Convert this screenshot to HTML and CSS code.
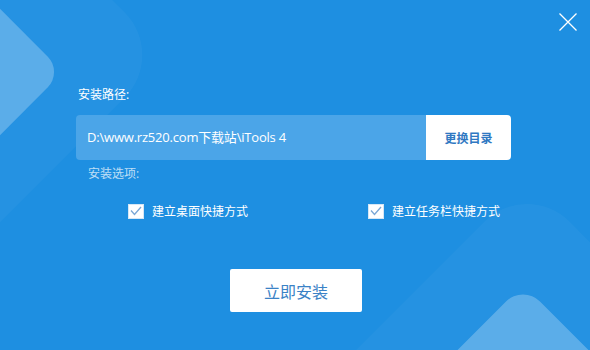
FILE: index.html
```html
<!DOCTYPE html>
<html lang="zh-CN">
<head>
<meta charset="utf-8">
<title>iTools 安装</title>
<link rel="stylesheet" href="styles.css">
</head>
<body>
<div class="window">
  <div class="deco deco-tl-soft"></div>
  <div class="deco deco-tl"></div>
  <div class="deco deco-br-soft"></div>
  <div class="deco deco-br"></div>

  <div class="titlebar">
    <button class="close" aria-label="关闭">
      <svg width="18" height="18" viewBox="0 0 18 18"><path d="M0.5 0.5 L17.5 17.5 M17.5 0.5 L0.5 17.5" stroke="#fff" stroke-width="1.3" fill="none"/></svg>
    </button>
  </div>

  <div class="content">
    <div class="label">安装路径:</div>
    <div class="path-row">
      <div class="path-input">D:\www.rz520.com下载站\iTools 4</div>
      <button class="path-btn">更换目录</button>
    </div>
    <div class="label label-dim">安装选项:</div>
    <div class="options">
      <label class="option">
        <span class="checkbox"><svg width="12" height="10" viewBox="0 0 12 10"><path d="M1 4.5 L4.5 8.5 L11 1" stroke="#7aa7d6" stroke-width="1.3" fill="none"/></svg></span>
        <span>建立桌面快捷方式</span>
      </label>
      <label class="option">
        <span class="checkbox"><svg width="12" height="10" viewBox="0 0 12 10"><path d="M1 4.5 L4.5 8.5 L11 1" stroke="#7aa7d6" stroke-width="1.3" fill="none"/></svg></span>
        <span>建立任务栏快捷方式</span>
      </label>
    </div>
  </div>

  <div class="actions">
    <button class="install">立即安装</button>
  </div>
</div>
</body>
</html>
```

FILE: styles.css
```css
* { box-sizing: border-box; }
html, body { margin: 0; padding: 0; }
body {
  width: 590px;
  height: 350px;
  overflow: hidden;
  font-family: "Open Sans", "Noto Sans CJK SC", sans-serif;
}
.window {
  position: relative;
  width: 590px;
  height: 350px;
  background: #1e8fe1;
  overflow: hidden;
  color: #fff;
}
.deco {
  position: absolute;
  transform: rotate(45deg);
  pointer-events: none;
}
.deco-tl {
  width: 160px;
  height: 160px;
  left: -130px;
  top: -8px;
  border-radius: 22px;
  background: rgba(255,255,255,0.25);
}
.deco-tl-soft {
  width: 300px;
  height: 300px;
  left: -195px;
  top: -95px;
  border-radius: 60px;
  background: rgba(255,255,255,0.035);
}
.deco-br {
  width: 200px;
  height: 200px;
  left: 423px;
  top: 326px;
  border-radius: 24px;
  background: rgba(255,255,255,0.25);
}
.deco-br-soft {
  width: 400px;
  height: 400px;
  left: 327px;
  top: 262px;
  border-radius: 60px;
  background: rgba(255,255,255,0.035);
}
.titlebar {
  position: relative;
  display: flex;
  justify-content: flex-end;
  padding: 13px 13px 0 0;
  height: 31px;
}
.close {
  width: 18px;
  height: 18px;
  padding: 0;
  border: 0;
  background: transparent;
  display: block;
}
.close svg { display: block; }
.content {
  position: relative;
  padding-left: 76px;
}
.label {
  font-size: 12px;
  line-height: 16px;
  margin-top: 56px;
  padding-left: 2px;
  color: #fff;
}
.label-dim {
  margin-top: 6px;
  padding-left: 12px;
  color: rgba(255,255,255,0.72);
}
.path-row {
  display: flex;
  width: 435px;
  height: 45px;
  margin-top: 12px;
}
.path-input {
  flex: 1;
  background: #4ba5e8;
  border-radius: 4px 0 0 4px;
  font-size: 13px;
  letter-spacing: -0.2px;
  line-height: 45px;
  padding-left: 11px;
  color: #fff;
}
.path-btn {
  width: 85px;
  border: 0;
  background: #fff;
  border-radius: 0 4px 4px 0;
  font-family: "Noto Sans CJK SC", sans-serif;
  font-size: 12px;
  font-weight: 700;
  color: #2f78c2;
  padding: 0;
}
.options {
  display: grid;
  grid-template-columns: 240px 200px;
  padding-left: 52px;
  margin-top: 21px;
}
.option {
  display: flex;
  align-items: center;
  gap: 8px;
  font-size: 12px;
  line-height: 16px;
  color: #fff;
  font-family: "Noto Sans CJK SC", sans-serif;
}
.checkbox {
  width: 16px;
  height: 15px;
  background: #fff;
  border: 1px solid #d6e7f6;
  display: flex;
  align-items: center;
  justify-content: center;
}
.checkbox svg { display: block; }
.actions {
  position: relative;
  display: flex;
  padding-left: 230px;
  margin-top: 50px;
}
.install {
  width: 132px;
  height: 43px;
  border: 0;
  border-radius: 2px;
  background: #fff;
  font-family: "Noto Sans CJK SC", sans-serif;
  font-size: 16px;
  color: #3a82c6;
  padding: 0;
}
```
